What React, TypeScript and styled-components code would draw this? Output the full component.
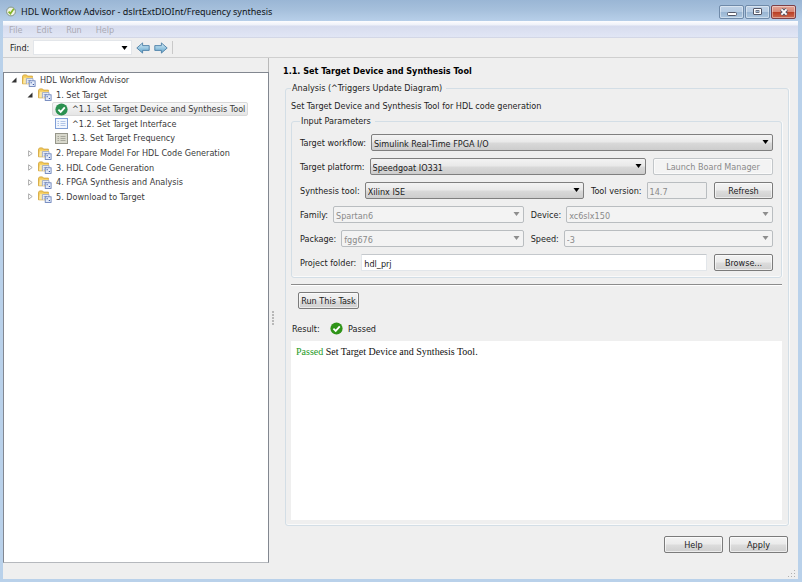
import React from "react";
import styled, { createGlobalStyle, css } from "styled-components";

const UI_FONT = '"DejaVu Sans Condensed", "DejaVu Sans", sans-serif';
const FACE = "#efefef";
const TEXT = "#1c1c1c";
const MUTED = "#8a8a8a";
const FRAME = "#b9d1ea";

const GlobalStyle = createGlobalStyle`
  *, *::before, *::after { box-sizing: border-box; }
  body { margin: 0; background: ${FRAME}; }
  body, button, input, select {
    font-family: ${UI_FONT};
    font-size: 9px;
    line-height: 12px;
    color: ${TEXT};
  }
  svg { display: block; flex: none; }
`;

/* ---------- window ---------- */

const Window = styled.div`
  display: flex;
  flex-direction: column;
  min-height: 100vh;
  padding: 0 4px 3px 3px;
  background: linear-gradient(#9ab6d5 0, #a6c0dc 10px, #b6cee8 20px, ${FRAME} 40px);
`;

const TitleBar = styled.header`
  display: flex;
  align-items: center;
  gap: 5px;
  height: 21px;
  padding: 2px 2px 0 3px;
`;

const Title = styled.h1`
  flex: 1;
  margin: 0;
  font: 400 9px/12px "Noto Sans", "Open Sans", sans-serif;
  color: #101418;
  white-space: nowrap;
`;

const CaptionButtons = styled.div`
  display: flex;
  gap: 1px;
`;

const CaptionButton = styled.button<{ $danger?: boolean }>`
  display: grid;
  place-items: center;
  width: 25px;
  height: 14px;
  padding: 0;
  border: 1px solid ${(p) => (p.$danger ? "#7d4048" : "#6f8aa9")};
  border-radius: 2px;
  box-shadow: inset 0 0 0 1px rgba(255, 255, 255, 0.4);
  background: ${(p) =>
    p.$danger
      ? "linear-gradient(#e3a497 0, #d68573 6px, #b93c22 6px, #cc6a50 100%)"
      : "linear-gradient(#bfd2e7 0, #b4cae2 6px, #98b4d2 6px, #adc7e0 100%)"};
`;

const MenuBar = styled.nav`
  display: flex;
  align-items: center;
  gap: 14px;
  height: 17px;
  padding: 1px 6px 0;
  border-bottom: 1px solid #d3d7e6;
  background: linear-gradient(#fdfdff 0, #eef1f9 4px, #d7dcee 5px, #e1e6f5 100%);
`;

const MenuItem = styled.button`
  padding: 0;
  border: 0;
  background: none;
  color: #aaaab4;
`;

const ToolBar = styled.div`
  display: flex;
  align-items: center;
  gap: 4px;
  height: 20px;
  padding: 0 7px;
  border-bottom: 1px solid #cfcfcf;
  background: ${FACE};
`;

const FindCombo = styled.div`
  display: flex;
  align-items: center;
  width: 99px;
  height: 15px;
  padding-right: 3px;
  background: #fff;
  border: 1px solid #e3e6ea;
`;

const FindInput = styled.input`
  flex: 1;
  min-width: 0;
  height: 13px;
  padding: 0 2px;
  border: 0;
  outline: 0;
  background: transparent;
`;

const IconButton = styled.button`
  display: grid;
  place-items: center;
  padding: 0;
  border: 0;
  background: none;
`;

const ToolDivider = styled.span`
  width: 1px;
  height: 13px;
  background: #c9c9c9;
`;

/* ---------- body ---------- */

const Body = styled.div`
  display: flex;
  flex: 1;
  background: ${FACE};
`;

const Sidebar = styled.aside`
  display: flex;
  flex-direction: column;
  flex: 0 1 266px;
  padding-bottom: 16px;
`;

const SidebarHeader = styled.div`
  height: 14px;
  border-right: 1px solid #b9b9b9;
`;

const TreePane = styled.div`
  flex: 1;
  border: 1px solid #828790;
  border-bottom-color: #b5b8bd;
  background: #fff;
`;

const Tree = styled.ul`
  display: grid;
  grid-auto-rows: 1fr;
  height: 131px;
  margin: 0;
  padding: 0 4px;
  list-style: none;
`;

const TreeRow = styled.li<{ $level: number }>`
  display: flex;
  align-items: center;
  padding-left: ${(p) => p.$level * 16}px;
`;

const Expander = styled(IconButton)`
  width: 12px;
  height: 12px;
`;

const Leaf = styled.span`
  width: 12px;
`;

const TreeLabel = styled.span<{ $selected?: boolean }>`
  display: flex;
  align-items: center;
  gap: 4px;
  height: 14px;
  padding: 0 2px 0 1px;
  border: 1px solid transparent;
  border-radius: 2px;
  color: #3a3a3a;
  white-space: nowrap;
  ${(p) =>
    p.$selected &&
    css`
      border-color: #d9d9d9;
      background: linear-gradient(#f8f8f8, #e5e5e5);
    `}
`;

const IconSlot = styled.span`
  display: grid;
  place-items: center;
  width: 14px;
`;

const Splitter = styled.div`
  display: grid;
  place-items: center;
  width: 6px;
`;

const TaskPane = styled.main`
  display: flex;
  flex: 1;
  flex-direction: column;
  min-width: 0;
  padding: 7px 9px 0 8px;
`;

const TaskTitle = styled.h2`
  margin: 0 0 5px;
  font-size: 9px;
  line-height: 12px;
  font-weight: 700;
  color: #000;
`;

const Group = styled.fieldset`
  min-width: 0;
  margin: 0;
  border: 1px solid #d3dee6;
  border-radius: 3px;
  box-shadow: inset 0 -1px #fafafa, 1px 0 #fafafa;
`;

const AnalysisGroup = styled(Group)`
  display: flex;
  flex: 1;
  flex-direction: column;
  margin-left: 2px;
  padding: 6px 6px 5px 5px;
`;

const ParameterGroup = styled(Group)`
  display: flex;
  flex-direction: column;
  gap: 7px;
  margin-top: 3px;
  padding: 7px 8px 6px;
`;

const Legend = styled.legend`
  padding: 0 4px 0 1px;
`;

const Paragraph = styled.p`
  margin: 0;
`;

/* ---------- form ---------- */

const FormRow = styled.div`
  display: flex;
  align-items: center;
  gap: 7px;
`;

const Field = styled.div<{ $grow?: number; $width?: number }>`
  display: flex;
  align-items: center;
  gap: 5px;
  min-width: 0;
  flex: ${(p) => (p.$width ? `0 0 ${p.$width}px` : `${p.$grow ?? 1} 1 0`)};
`;

const FieldLabel = styled.label`
  white-space: nowrap;
`;

const SelectBox = styled.span`
  position: relative;
  display: flex;
  flex: 1;
  min-width: 0;
`;

const SelectControl = styled.select`
  flex: 1;
  min-width: 0;
  height: 17px;
  padding: 2px 16px 0 2px;
  appearance: none;
  border: 1px solid #7f7f7f;
  border-radius: 2px;
  background: linear-gradient(#f3f3f3 0, #e9e9e9 7px, #d9d9d9 8px, #cdcdcd 100%);
  color: ${TEXT};
  &:disabled {
    border-color: #b9bdc0;
    background: #f3f3f3;
    color: ${MUTED};
    opacity: 1;
  }
`;

const SelectCaret = styled.span`
  position: absolute;
  top: 6px;
  right: 4px;
  pointer-events: none;
`;

const TextInput = styled.input`
  flex: 1;
  min-width: 0;
  height: 17px;
  padding: 2px 2px 0;
  border: 1px solid #e2e6ea;
  border-top-color: #c4c8cc;
  border-radius: 1px;
  background: #fff;
  &:disabled {
    border-color: #b9bdc0;
    background: ${FACE};
    color: ${MUTED};
  }
`;

const PushButton = styled.button<{ $width: number }>`
  flex: none;
  width: ${(p) => p.$width}px;
  height: 17px;
  padding: 0;
  border: 1px solid #7b7b7b;
  border-radius: 2px;
  box-shadow: inset 0 0 0 1px rgba(255, 255, 255, 0.6);
  background: linear-gradient(#f3f3f3 0, #ebebeb 7px, #dcdcdc 8px, #cfcfcf 100%);
  white-space: nowrap;
  &:disabled {
    border-color: #c2c6c9;
    background: #f3f3f3;
    color: ${MUTED};
  }
`;

const Rule = styled.hr`
  width: 100%;
  margin: 6px 0;
  border: 0;
  border-top: 1px solid #8c8c8c;
  border-bottom: 1px solid #fff;
`;

const RunRow = styled.div`
  display: flex;
  padding-left: 7px;
`;

const ResultRow = styled.div`
  display: flex;
  align-items: center;
  gap: 5px;
  height: 13px;
  margin: 13px 0 6px;
  padding-left: 1px;
`;

const ResultLabel = styled.span`
  width: 33px;
`;

const Output = styled.output`
  flex: 1;
  padding: 4px 5px;
  background: #fff;
  font: 10px/13px "Liberation Serif", serif;
  color: #111;
`;

const PassedWord = styled.span`
  color: #1e9a1e;
`;

const Footer = styled.footer`
  display: flex;
  justify-content: flex-end;
  gap: 6px;
  padding: 10px 1px 16px 0;
`;

const StatusStrip = styled.div`
  display: flex;
  justify-content: flex-end;
  height: 10px;
  padding: 1px 2px 0;
  margin-right: -9px;
`;

/* ---------- icons ---------- */

const CaretIcon = ({ disabled }: { disabled?: boolean }) => (
  <svg width="7" height="4" viewBox="0 0 7 4" aria-hidden="true">
    <path d="M0.5 0h6L3.5 4z" fill={disabled ? "#8d8d8d" : "#000"} />
  </svg>
);

const AppIcon = () => (
  <svg width="10" height="11" viewBox="0 0 10 11" aria-hidden="true">
    <circle cx="5" cy="5.5" r="4.4" fill="#f1f4e8" stroke="#7d8d78" strokeWidth="0.9" />
    <path d="M2.6 5.6l1.8 2L7.8 2.8" fill="none" stroke="#86b52a" strokeWidth="1.7" />
  </svg>
);

const MinimizeIcon = () => (
  <svg width="10" height="8" viewBox="0 0 10 8" aria-hidden="true">
    <rect x="0.5" y="4.5" width="9" height="3" rx="1" fill="#fff" stroke="#535666" />
  </svg>
);

const MaximizeIcon = () => (
  <svg width="9" height="7" viewBox="0 0 9 7" aria-hidden="true">
    <rect x="0.5" y="0.5" width="8" height="6" rx="0.5" fill="#fff" stroke="#535666" />
    <rect x="3" y="2.6" width="3" height="1.8" fill="#9fb9d5" stroke="#535666" strokeWidth="0.8" />
  </svg>
);

const CloseIcon = () => (
  <svg width="10" height="8" viewBox="0 0 10 8" aria-hidden="true">
    <path d="M2.4 1.4l5.2 5.2M7.6 1.4L2.4 6.6" stroke="#535666" strokeWidth="3.8" />
    <path d="M2.4 1.4l5.2 5.2M7.6 1.4L2.4 6.6" stroke="#fff" strokeWidth="2" />
  </svg>
);

const ArrowIcon = ({ back }: { back?: boolean }) => (
  <svg width="14" height="12" viewBox="0 0 14 12" aria-hidden="true">
    <defs>
      <linearGradient id={back ? "arrowBack" : "arrowNext"} x1="0" y1="0" x2="0" y2="1">
        <stop offset="0" stopColor="#d7eef8" />
        <stop offset="1" stopColor="#5fa3cb" />
      </linearGradient>
    </defs>
    <path
      d={
        back
          ? "M0.8 6L6.6 0.9V3.6H13.2V8.4H6.6V11.1Z"
          : "M13.2 6L7.4 0.9V3.6H0.8V8.4H7.4V11.1Z"
      }
      fill={`url(#${back ? "arrowBack" : "arrowNext"})`}
      stroke="#4c7fa6"
      strokeWidth="0.9"
      strokeLinejoin="round"
    />
  </svg>
);

const ExpandedIcon = () => (
  <svg width="6" height="6" viewBox="0 0 6 6" aria-hidden="true">
    <path d="M5.5 0.5V5.5H0.5Z" fill="#333" />
  </svg>
);

const CollapsedIcon = () => (
  <svg width="5" height="7" viewBox="0 0 5 7" aria-hidden="true">
    <path d="M0.6 0.8L4.2 3.5L0.6 6.2Z" fill="#fff" stroke="#a4a4a4" strokeWidth="0.9" />
  </svg>
);

const FolderIcon = () => (
  <svg width="14" height="13" viewBox="0 0 14 13" aria-hidden="true">
    <path d="M0.5 9.8V2.2L1.5 0.9H4.5L5.5 2.1H10.4V9.8Z" fill="#f3cb5c" stroke="#cf9f35" strokeWidth="0.8" />
    <path d="M1.1 9.4L1.9 3.8H11L10.4 9.4Z" fill="#fde9a4" />
    <path d="M4.4 10V4.6H11V7" fill="#f4f7fd" stroke="#8b9cc4" strokeWidth="0.8" />
    <path d="M5.6 6.4h3.4M5.6 8.2h1.4" stroke="#8b9cc4" strokeWidth="0.8" />
    <rect x="7.2" y="6.8" width="5.9" height="5.7" fill="#e3ebf9" stroke="#5f78b4" strokeWidth="0.8" />
    <path d="M8.6 8.2h1.2v1.1H8.6zM10.8 9.9h1.2V11h-1.2z" fill="#3f5ba6" />
  </svg>
);

const PassedIcon = ({ tone }: { tone: string }) => (
  <svg width="13" height="13" viewBox="0 0 13 13" aria-hidden="true">
    <circle cx="6.5" cy="6.5" r="6.1" fill={tone} />
    <path d="M3.4 6.7l2.3 2.2 4.1-4.5" fill="none" stroke="#fff" strokeWidth="1.8" />
  </svg>
);

const TaskIcon = ({ inactive }: { inactive?: boolean }) => {
  const line = inactive ? "#96968a" : "#7f9ed6";
  return (
    <svg width="13" height="11" viewBox="0 0 13 11" aria-hidden="true">
      <rect x="0.5" y="0.5" width="12" height="10" fill={inactive ? "#d8d8cc" : "#f1f6fe"} stroke={line} />
      <path
        d="M2.5 3.5h1.5M2.5 5.5h1.5M2.5 7.5h1.5M5.5 3.5h5M5.5 5.5h5M5.5 7.5h5"
        stroke={inactive ? "#a3a397" : "#a9bfe4"}
        strokeWidth="0.9"
      />
    </svg>
  );
};

const GripDots = () => (
  <svg width="3" height="15" viewBox="0 0 3 15" aria-hidden="true">
    {[0, 3, 6, 9, 12].map((y) => (
      <rect key={y} x="1" y={y} width="2" height="2" fill="#b8b8b8" />
    ))}
  </svg>
);

const SizeGrip = () => (
  <svg width="8" height="8" viewBox="0 0 8 8" aria-hidden="true">
    <path d="M6 0h1v1H6zM3 3h1v1H3zM6 3h1v1H6zM0 6h1v1H0zM3 6h1v1H3zM6 6h1v1H6z" fill="#b0b0b0" />
  </svg>
);

/* ---------- composed parts ---------- */

type SelectFieldProps = { id: string; label: string; value: string; disabled?: boolean; grow?: number };

const SelectField = ({ id, label, value, disabled, grow }: SelectFieldProps) => (
  <Field $grow={grow}>
    <FieldLabel htmlFor={id}>{label}</FieldLabel>
    <SelectBox>
      <SelectControl id={id} disabled={disabled} defaultValue={value}>
        <option>{value}</option>
      </SelectControl>
      <SelectCaret>
        <CaretIcon disabled={disabled} />
      </SelectCaret>
    </SelectBox>
  </Field>
);

type Node = { text: string; level: number; icon: React.ReactNode; open?: boolean; leaf?: boolean; selected?: boolean };

const nodes: Node[] = [
  { text: "HDL Workflow Advisor", level: 0, icon: <FolderIcon />, open: true },
  { text: "1. Set Target", level: 1, icon: <FolderIcon />, open: true },
  { text: "^1.1. Set Target Device and Synthesis Tool", level: 2, icon: <PassedIcon tone="#2c9150" />, leaf: true, selected: true },
  { text: "^1.2. Set Target Interface", level: 2, icon: <TaskIcon />, leaf: true },
  { text: "1.3. Set Target Frequency", level: 2, icon: <TaskIcon inactive />, leaf: true },
  { text: "2. Prepare Model For HDL Code Generation", level: 1, icon: <FolderIcon /> },
  { text: "3. HDL Code Generation", level: 1, icon: <FolderIcon /> },
  { text: "4. FPGA Synthesis and Analysis", level: 1, icon: <FolderIcon /> },
  { text: "5. Download to Target", level: 1, icon: <FolderIcon /> },
];

export default function App() {
  return (
    <>
      <GlobalStyle />
      <Window>
        <TitleBar>
          <AppIcon />
          <Title>HDL Workflow Advisor - dslrtExtDIOInt/Frequency synthesis</Title>
          <CaptionButtons>
            <CaptionButton aria-label="Minimize"><MinimizeIcon /></CaptionButton>
            <CaptionButton aria-label="Maximize"><MaximizeIcon /></CaptionButton>
            <CaptionButton aria-label="Close" $danger><CloseIcon /></CaptionButton>
          </CaptionButtons>
        </TitleBar>
        <MenuBar>
          {["File", "Edit", "Run", "Help"].map((name) => (
            <MenuItem key={name} disabled>{name}</MenuItem>
          ))}
        </MenuBar>
        <ToolBar>
          <FieldLabel htmlFor="find">Find:</FieldLabel>
          <FindCombo>
            <FindInput id="find" type="text" />
            <IconButton aria-label="Search history"><CaretIcon /></IconButton>
          </FindCombo>
          <IconButton aria-label="Find previous"><ArrowIcon back /></IconButton>
          <IconButton aria-label="Find next"><ArrowIcon /></IconButton>
          <ToolDivider />
        </ToolBar>
        <Body>
          <Sidebar>
            <SidebarHeader />
            <TreePane>
              <Tree role="tree">
                {nodes.map((node) => (
                  <TreeRow key={node.text} $level={node.level} role="treeitem" aria-level={node.level + 1} aria-selected={!!node.selected}>
                    {node.leaf ? (
                      <Leaf />
                    ) : (
                      <Expander aria-label={node.open ? "Collapse" : "Expand"}>
                        {node.open ? <ExpandedIcon /> : <CollapsedIcon />}
                      </Expander>
                    )}
                    <TreeLabel $selected={node.selected}>
                      <IconSlot>{node.icon}</IconSlot>
                      {node.text}
                    </TreeLabel>
                  </TreeRow>
                ))}
              </Tree>
            </TreePane>
          </Sidebar>
          <Splitter><GripDots /></Splitter>
          <TaskPane>
            <TaskTitle>1.1. Set Target Device and Synthesis Tool</TaskTitle>
            <AnalysisGroup>
              <Legend>Analysis (^Triggers Update Diagram)</Legend>
              <Paragraph>Set Target Device and Synthesis Tool for HDL code generation</Paragraph>
              <ParameterGroup>
                <Legend>Input Parameters</Legend>
                <FormRow>
                  <SelectField id="workflow" label="Target workflow:" value="Simulink Real-Time FPGA I/O" />
                </FormRow>
                <FormRow>
                  <SelectField id="platform" label="Target platform:" value="Speedgoat IO331" />
                  <PushButton $width={120} disabled>Launch Board Manager</PushButton>
                </FormRow>
                <FormRow>
                  <SelectField id="tool" label="Synthesis tool:" value="Xilinx ISE" />
                  <Field $width={116}>
                    <FieldLabel htmlFor="version">Tool version:</FieldLabel>
                    <TextInput id="version" type="text" defaultValue="14.7" disabled />
                  </Field>
                  <PushButton $width={59}>Refresh</PushButton>
                </FormRow>
                <FormRow>
                  <SelectField id="family" label="Family:" value="Spartan6" disabled grow={12} />
                  <SelectField id="device" label="Device:" value="xc6slx150" disabled grow={13} />
                </FormRow>
                <FormRow>
                  <SelectField id="package" label="Package:" value="fgg676" disabled grow={12} />
                  <SelectField id="speed" label="Speed:" value="-3" disabled grow={13} />
                </FormRow>
                <FormRow>
                  <Field>
                    <FieldLabel htmlFor="folder">Project folder:</FieldLabel>
                    <TextInput id="folder" type="text" defaultValue="hdl_prj" />
                  </Field>
                  <PushButton $width={59}>Browse...</PushButton>
                </FormRow>
              </ParameterGroup>
              <Rule />
              <RunRow><PushButton $width={61}>Run This Task</PushButton></RunRow>
              <ResultRow>
                <ResultLabel>Result:</ResultLabel>
                <PassedIcon tone="#2f9418" />
                <span>Passed</span>
              </ResultRow>
              <Output>
                <PassedWord>Passed</PassedWord> Set Target Device and Synthesis Tool.
              </Output>
            </AnalysisGroup>
            <Footer>
              <PushButton $width={59}>Help</PushButton>
              <PushButton $width={59}>Apply</PushButton>
            </Footer>
            <StatusStrip><SizeGrip /></StatusStrip>
          </TaskPane>
        </Body>
      </Window>
    </>
  );
}
